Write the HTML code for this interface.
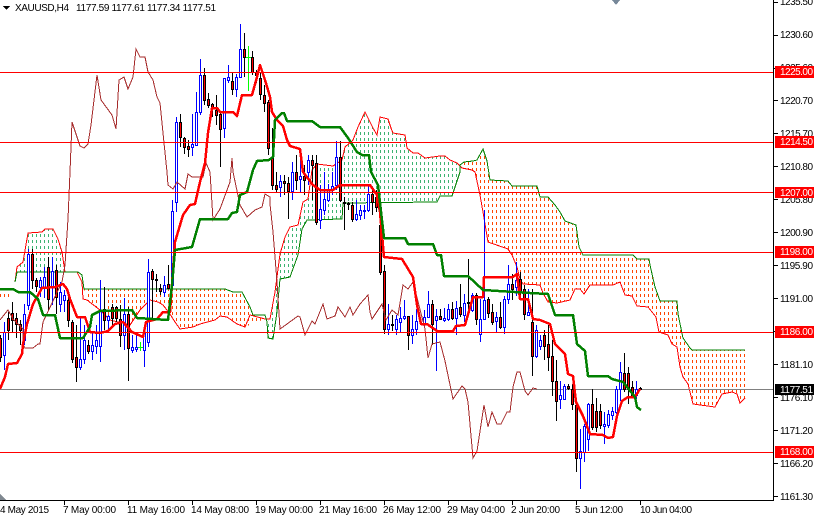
<!DOCTYPE html>
<html><head><meta charset="utf-8"><title>XAUUSD,H4</title>
<style>html,body{margin:0;padding:0;background:#fff;width:814px;height:516px;overflow:hidden}svg{display:block}text{font-family:"Liberation Sans",sans-serif;font-size:10px;fill:#000}</style></head>
<body>
<svg width="814" height="516" viewBox="0 0 814 516" xmlns="http://www.w3.org/2000/svg">
<defs>
<pattern id="g" width="4" height="6" patternUnits="userSpaceOnUse"><rect x="0" y="0" width="1" height="3" fill="#3CB371"/></pattern>
<pattern id="o" width="4" height="6" patternUnits="userSpaceOnUse"><rect x="0" y="0" width="1" height="3" fill="#FF4500"/></pattern>
</defs>
<g shape-rendering="crispEdges">
<path fill="url(#g)" d="M15 282L17 267L23 262L28 233L42 232L45 229L53 229L58 239L62 252L65 272L78 272L15 272Z"/>
<path fill="url(#o)" d="M84 289L225 289L233 292L242 292L250 307L253 315L265 319L245 327L237 324L227 317L220 316L215 320L200 324L193 327L180 329L175 322L170 314L163 305L158 302L150 300L140 310L130 325L110 320L100 310L87 300Z"/>
<path fill="url(#o)" d="M0 291L12 291L8 299L0 299Z"/>
<path fill="url(#g)" d="M267 322L268 338L273 339L277 312L280 279L290 277L298 255L302 229L307 220L342 219L343 203L437 202L440 196L452 196L460 172L460 165L457 163L450 160L445 156L440 156L425 158L418 153L413 153L407 148L405 135L393 133L391 128L388 119L380 117L377 135L373 128L370 122L365 112L358 127L353 140L345 147L342 160L333 166L317 164L312 170L308 199L303 202L298 225L290 227L285 237L280 254L275 292L270 319Z"/>
<path fill="url(#o)" d="M462 168L464 162L473 161L477 160L483 149L487 161L490 180L508 181L512 186L537 186L540 197L548 197L555 205L560 212L565 221L576 225L579 247L583 255L633 255L637 259L649 259L650 265L655 287L660 301L677 301L678 314L683 338L690 348L692 350L745 350L745 398L740 403L737 394L732 392L722 394L715 407L693 404L688 384L683 377L680 367L677 347L672 344L668 335L659 332L656 317L648 307L637 306L632 296L625 295L620 282L613 285L590 285L584 294L580 289L575 289L570 300L557 303L548 302L543 293L540 285L523 284L520 279L517 267L512 255L508 249L488 242L483 212L480 195L475 172L472 170Z"/>

<path fill="none" stroke="#f00" d="M15 282L17 267L23 262L28 233L42 232L45 229L53 229L58 239L62 252L65 272L77 272L82 282L83 299L87 300L100 310L110 320L130 325L140 310L150 300L158 302L163 305L170 314L175 322L180 329L193 327L200 324L215 320L220 316L227 317L237 324L245 327L250 315L265 319L270 319L275 292L280 254L285 237L290 227L298 225L303 202L308 199L312 170L317 164L333 166L342 160L345 147L353 140L358 127L365 112L370 122L373 128L377 135L380 117L388 119L391 128L393 133L405 135L407 148L413 153L418 153L425 158L440 156L445 156L450 160L457 163L462 168L472 170L475 172L480 195L483 212L488 242L508 249L512 255L517 267L520 279L523 284L540 285L543 293L548 302L557 303L570 300L575 289L580 289L584 294L590 285L613 285L620 282L625 295L632 296L637 306L648 307L656 317L659 332L668 335L672 344L677 347L680 367L683 377L688 384L693 404L715 407L722 394L732 392L737 394L740 403L745 398"/>
<path fill="none" stroke="#008000" d="M15 282L17 272L78 272L82 275L84 289L225 289L233 292L242 292L250 307L253 315L265 315L267 322L268 338L273 339L277 312L280 279L290 277L298 255L302 229L307 220L342 219L343 203L437 202L440 196L452 196L460 172L460 165L464 162L473 161L477 160L483 149L487 161L490 180L508 181L512 186L537 186L540 197L548 197L555 205L560 212L565 221L576 225L579 247L583 255L633 255L637 259L649 259L650 265L655 287L660 301L677 301L678 314L683 338L690 348L692 350L745 350"/>
<path fill="none" stroke="#808080" d="M0 389.5H773"/>

<path fill="none" stroke="#000" d="M0.5 335V362M8.5 312V340M12.5 302V332M16.5 313V338M20.5 320V345M32.5 249V289M36.5 278V292M48.5 257V310M56.5 265V314M68.5 297V327M72.5 320V363M76.5 325V382M88.5 340V354M104.5 287V330M112.5 304V325M116.5 306V322M120.5 305V347M128.5 307V381M152.5 269V319M156.5 274V292M160.5 284V295M168.5 265V289M180.5 114V147M184.5 137V154M188.5 140V157M204.5 68V105M208.5 93V108M212.5 103V117M216.5 95V125M220.5 112V167M232.5 72V95M244.5 33V77M252.5 51V75M256.5 70V83M260.5 72V100M264.5 85V112M268.5 100V155M272.5 128V190M276.5 172V192M284.5 175V195M288.5 177V219M296.5 155V190M304.5 165V195M312.5 155V200M316.5 155V225M340.5 141V202M344.5 197V230M348.5 202V210M352.5 202V222M372.5 190V215M376.5 190V212M380.5 202V275M384.5 265V334M392.5 315V331M408.5 316V350M432.5 300V345M440.5 309V320M452.5 302V320M460.5 284V317M468.5 259V315M476.5 293V325M488.5 297V318M492.5 304V325M500.5 302V329M512.5 274V300M520.5 272V297M524.5 285V320M532.5 289V376M544.5 330V360M548.5 325V371M552.5 340V396M556.5 360V421M568.5 384V390M572.5 384V410M576.5 404V472M592.5 389V430M596.5 398V432M600.5 404V429M624.5 353V392M628.5 367V404M632.5 381V397M640.5 387V390"/>
<path fill="none" stroke="#00f" d="M4.5 322V370M24.5 304V345M28.5 249V310M40.5 277V297M44.5 267V298M52.5 257V305M60.5 282V312M64.5 290V312M80.5 318V370M84.5 325V364M92.5 332V360M96.5 325V354M100.5 280V362M108.5 315V330M124.5 298V350M132.5 335V353M136.5 335V352M144.5 332V367M148.5 259V347M164.5 276V297M172.5 200V290M176.5 117V212M192.5 114V156M196.5 92V146M200.5 59V115M224.5 78V138M228.5 65V83M236.5 74V97M240.5 24V78M280.5 175V197M292.5 162V200M300.5 155V192M308.5 155V185M320.5 185V229M324.5 172V215M328.5 184V202M332.5 172V195M336.5 141V190M356.5 200V221M360.5 205V220M364.5 205V219M368.5 185V212M388.5 304V335M396.5 315V335M400.5 307V332M404.5 300V320M412.5 315V344M416.5 309V335M424.5 310V328M428.5 291V318M436.5 309V371M444.5 308V322M448.5 304V321M456.5 301V335M464.5 294V322M472.5 293V312M480.5 299V342M484.5 210V320M496.5 312V332M504.5 296V334M508.5 265V304M516.5 262V296M528.5 289V316M536.5 325V358M540.5 335V350M560.5 381V409M564.5 384V400M580.5 429V489M584.5 424V462M588.5 403V451M604.5 412V444M608.5 410V428M612.5 407V420M616.5 386V414M620.5 362V401M636.5 381V399"/>
<path fill="none" stroke="#0f0" d="M140.5 342V351M138 347.5H143M248.5 46V91M246 57.5H251"/>

<path fill="#f00" stroke="#000" d="M-.5 338.5h2v19h-2zM7.5 318.5h2v12h-2zM11.5 313.5h2v7h-2zM15.5 318.5h2v6h-2zM19.5 324.5h2v6h-2zM31.5 254.5h2v26h-2zM35.5 280.5h2v6h-2zM47.5 267.5h2v32h-2zM55.5 270.5h2v27h-2zM67.5 300.5h2v20h-2zM71.5 322.5h2v37h-2zM75.5 357.5h2v10h-2zM87.5 345.5h2v6h-2zM103.5 309.5h2v11h-2zM111.5 307.5h2v11h-2zM115.5 307.5h2v11h-2zM119.5 319.5h2v16h-2zM127.5 314.5h2v34h-2zM151.5 271.5h2v8h-2zM155.5 279.5h2v1h-2zM159.5 288.5h2v3h-2zM167.5 284.5h2v4h-2zM179.5 122.5h2v15h-2zM183.5 138.5h2v9h-2zM187.5 146.5h2v3h-2zM203.5 75.5h2v25h-2zM207.5 99.5h2v6h-2zM211.5 104.5h2v4h-2zM215.5 110.5h2v5h-2zM219.5 114.5h2v15h-2zM231.5 81.5h2v8h-2zM243.5 49.5h2v8h-2zM251.5 57.5h2v15h-2zM255.5 72.5h2v3h-2zM259.5 78.5h2v16h-2zM263.5 95.5h2v8h-2zM267.5 102.5h2v46h-2zM271.5 158.5h2v27h-2zM275.5 185.5h2v4h-2zM283.5 181.5h2v2h-2zM287.5 183.5h2v8h-2zM295.5 172.5h2v8h-2zM303.5 176.5h2v4h-2zM311.5 160.5h2v5h-2zM315.5 163.5h2v59h-2zM339.5 157.5h2v43h-2zM343.5 202.5h2v1h-2zM347.5 203.5h2v1h-2zM351.5 205.5h2v14h-2zM371.5 194.5h2v8h-2zM375.5 197.5h2v10h-2zM379.5 225.5h2v47h-2zM383.5 271.5h2v58h-2zM391.5 324.5h2v1h-2zM407.5 316.5h2v19h-2zM431.5 304.5h2v20h-2zM439.5 316.5h2v3h-2zM451.5 309.5h2v9h-2zM459.5 307.5h2v7h-2zM467.5 302.5h2v1h-2zM475.5 295.5h2v24h-2zM487.5 299.5h2v14h-2zM491.5 312.5h2v10h-2zM499.5 317.5h2v10h-2zM511.5 284.5h2v5h-2zM519.5 279.5h2v12h-2zM523.5 289.5h2v25h-2zM531.5 322.5h2v34h-2zM543.5 335.5h2v11h-2zM547.5 344.5h2v13h-2zM551.5 356.5h2v25h-2zM555.5 381.5h2v20h-2zM567.5 386.5h2v2h-2zM571.5 389.5h2v15h-2zM575.5 405.5h2v53h-2zM591.5 404.5h2v23h-2zM595.5 411.5h2v16h-2zM599.5 411.5h2v14h-2zM623.5 373.5h2v16h-2zM627.5 373.5h2v16h-2zM631.5 387.5h2v9h-2zM639.5 388.5h2v1h-2z"/>
<path fill="#fff" stroke="#00f" d="M3.5 332.5h2v23h-2zM23.5 314.5h2v26h-2zM27.5 254.5h2v51h-2zM39.5 280.5h2v7h-2zM43.5 277.5h2v10h-2zM51.5 271.5h2v16h-2zM59.5 292.5h2v12h-2zM63.5 295.5h2v5h-2zM79.5 359.5h2v8h-2zM83.5 340.5h2v19h-2zM91.5 345.5h2v6h-2zM95.5 340.5h2v6h-2zM99.5 310.5h2v36h-2zM107.5 316.5h2v4h-2zM123.5 314.5h2v21h-2zM131.5 347.5h2v3h-2zM135.5 347.5h2v2h-2zM143.5 332.5h2v18h-2zM147.5 272.5h2v70h-2zM163.5 285.5h2v7h-2zM171.5 211.5h2v74h-2zM175.5 122.5h2v80h-2zM191.5 144.5h2v3h-2zM195.5 112.5h2v33h-2zM199.5 75.5h2v37h-2zM223.5 78.5h2v50h-2zM227.5 77.5h2v3h-2zM235.5 77.5h2v12h-2zM239.5 49.5h2v28h-2zM279.5 181.5h2v6h-2zM291.5 172.5h2v19h-2zM299.5 176.5h2v3h-2zM307.5 160.5h2v12h-2zM319.5 209.5h2v11h-2zM323.5 199.5h2v11h-2zM327.5 190.5h2v10h-2zM331.5 186.5h2v4h-2zM335.5 157.5h2v28h-2zM355.5 214.5h2v5h-2zM359.5 210.5h2v5h-2zM363.5 210.5h2v1h-2zM367.5 194.5h2v16h-2zM387.5 324.5h2v5h-2zM395.5 319.5h2v10h-2zM399.5 318.5h2v4h-2zM403.5 316.5h2v2h-2zM411.5 329.5h2v6h-2zM415.5 321.5h2v8h-2zM423.5 317.5h2v7h-2zM427.5 304.5h2v13h-2zM435.5 316.5h2v4h-2zM443.5 318.5h2v2h-2zM447.5 309.5h2v10h-2zM455.5 308.5h2v10h-2zM463.5 303.5h2v12h-2zM471.5 295.5h2v15h-2zM479.5 319.5h2v15h-2zM483.5 300.5h2v19h-2zM495.5 317.5h2v4h-2zM503.5 299.5h2v28h-2zM507.5 284.5h2v15h-2zM515.5 280.5h2v7h-2zM527.5 312.5h2v3h-2zM535.5 330.5h2v26h-2zM539.5 340.5h2v6h-2zM559.5 395.5h2v4h-2zM563.5 386.5h2v13h-2zM579.5 451.5h2v7h-2zM583.5 426.5h2v26h-2zM587.5 404.5h2v35h-2zM603.5 424.5h2v2h-2zM607.5 414.5h2v11h-2zM611.5 411.5h2v4h-2zM615.5 389.5h2v23h-2zM619.5 372.5h2v17h-2zM635.5 389.5h2v6h-2z"/>

<path fill="none" stroke="#A52A2A" d="M0 320L8 310L13 319L23 329L23 344L25 348L33 348L38 344L40 344L43 322L62 282L65 265L68 219L70 172L72 122L77 137L80 146L84 148L88 144L91 125L94 100L97 75L101 100L112 115L116 129L119 80L124 77L128 89L133 77L136 49L140 57L145 57L148 72L153 80L157 97L160 103L163 133L167 172L168 185L173 189L177 182L185 189L188 174L192 177L203 177L206 163L210 172L213 220L220 209L230 182L232 158L233 172L240 205L247 217L255 210L262 207L265 194L270 197L270 204L273 232L277 282L280 329L287 324L298 316L300 317L305 335L312 321L315 324L323 304L327 319L335 316L338 307L345 317L350 307L353 315L360 304L368 295L370 312L372 319L382 304L386 320L392 310L398 315L403 285L408 289L413 282L425 329L428 358L432 344L440 342L445 361L453 399L462 386L465 389L468 402L473 458L477 451L484 405L488 427L492 412L497 424L501 424L507 412L510 412L513 387L517 372L520 372L525 391L528 395L533 388L537 389"/>

<path fill="none" stroke="#f00" stroke-width="2.5" stroke-linejoin="round" d="M0 389L5 377L8 364L17 363L22 354L23 344L27 324L33 304L42 288L55 287L63 284L67 289L70 299L77 317L85 317L90 332L100 333L108 331L115 324L123 322L132 332L143 337L146 322L157 319L163 312L170 312L175 242L183 215L190 205L195 204L200 182L205 163L208 133L212 108L217 108L220 112L233 112L237 116L242 95L252 95L257 77L260 65L265 80L268 90L270 97L272 112L277 120L283 126L287 140L290 146L300 149L303 172L313 185L320 190L333 190L340 185L370 185L377 195L380 212L384 257L402 259L413 277L417 305L421 324L427 324L437 331L453 331L456 326L465 325L473 297L483 297L484 277L513 277L517 274L520 299L528 299L533 319L540 320L550 324L555 344L565 354L568 374L573 376L576 402L583 416L590 434L603 435L608 438L613 437L617 416L622 401L628 397L635 397L640 389"/>
<path fill="none" stroke="#008000" stroke-width="2.5" stroke-linejoin="round" d="M0 289L13 289L18 292L30 292L38 299L43 315L55 315L60 338L83 338L90 327L92 315L100 311L132 310L137 318L168 320L172 285L175 250L192 247L200 219L228 219L232 213L237 212L240 195L247 192L253 170L257 161L269 160L273 157L275 120L282 113L284 113L287 121L312 121L320 127L340 127L348 138L357 152L362 155L369 155L371 172L378 185L384 238L405 238L408 244L433 244L437 255L441 255L444 276L468 276L483 290L530 293L548 294L555 315L573 315L577 344L585 351L588 376L608 376L612 379L623 382L635 397L637 407L641 410"/>

<path fill="none" stroke="#f00" d="M0 72.5H773M0 142.5H773M0 192.5H773M0 252.5H773M0 332.5H773M0 452.5H773"/>

<path fill="#778899" d="M612 0H620L616 5Z"/>
<path fill="#808890" d="M0 494L6 500H0Z"/>

<path fill="none" stroke="#000" d="M0 500.5H773.5M773.5 0V501M64.5 500V505M128.5 500V505M192.5 500V505M256.5 500V505M320.5 500V505M384.5 500V505M448.5 500V505M512.5 500V505M576.5 500V505M640.5 500V505M773 2.5H778M773 35.5H778M773 68.5H778M773 100.5H778M773 133.5H778M773 166.5H778M773 199.5H778M773 232.5H778M773 265.5H778M773 298.5H778M773 331.5H778M773 364.5H778M773 397.5H778M773 430.5H778M773 463.5H778M773 496.5H778"/>
<path fill="#000" d="M3 6H10L6.5 10Z"/>
</g>

<text x="15" y="11" textLength="54" lengthAdjust="spacing">XAUUSD,H4</text>
<text x="76" y="11" textLength="140" lengthAdjust="spacing">1177.59 1177.61 1177.34 1177.51</text>

<text x="780" y="5" textLength="33" lengthAdjust="spacing">1235.50</text>
<text x="780" y="38" textLength="33" lengthAdjust="spacing">1230.60</text>
<text x="780" y="71" textLength="33" lengthAdjust="spacing">1225.60</text>
<text x="780" y="104" textLength="33" lengthAdjust="spacing">1220.70</text>
<text x="780" y="137" textLength="33" lengthAdjust="spacing">1215.70</text>
<text x="780" y="170" textLength="33" lengthAdjust="spacing">1210.80</text>
<text x="780" y="203" textLength="33" lengthAdjust="spacing">1205.80</text>
<text x="780" y="236" textLength="33" lengthAdjust="spacing">1200.90</text>
<text x="780" y="269" textLength="33" lengthAdjust="spacing">1195.90</text>
<text x="780" y="302" textLength="33" lengthAdjust="spacing">1191.00</text>
<text x="780" y="368" textLength="33" lengthAdjust="spacing">1181.10</text>
<text x="780" y="401" textLength="33" lengthAdjust="spacing">1176.10</text>
<text x="780" y="434" textLength="33" lengthAdjust="spacing">1171.20</text>
<text x="780" y="467" textLength="33" lengthAdjust="spacing">1166.20</text>
<text x="780" y="500" textLength="33" lengthAdjust="spacing">1161.30</text>

<g shape-rendering="crispEdges"><path fill="#f00" d="M775 66h39v12h-39zM775 136h39v12h-39zM775 187h39v11h-39zM775 246h39v12h-39zM775 326h39v12h-39zM775 446h39v12h-39z"/><path fill="#000" d="M775 384h39v11h-39z"/></g>
<text x="780" y="75" textLength="33" lengthAdjust="spacing" style="fill:#fff">1225.00</text>
<text x="780" y="145" textLength="33" lengthAdjust="spacing" style="fill:#fff">1214.50</text>
<text x="780" y="196" textLength="33" lengthAdjust="spacing" style="fill:#fff">1207.00</text>
<text x="780" y="255" textLength="33" lengthAdjust="spacing" style="fill:#fff">1198.00</text>
<text x="780" y="335" textLength="33" lengthAdjust="spacing" style="fill:#fff">1186.00</text>
<text x="780" y="455" textLength="33" lengthAdjust="spacing" style="fill:#fff">1168.00</text>
<text x="780" y="393" textLength="33" lengthAdjust="spacing" style="fill:#fff">1177.51</text>

<text x="0" y="513" textLength="49" lengthAdjust="spacing">4 May 2015</text>
<text x="63" y="513" textLength="53" lengthAdjust="spacing">7 May 00:00</text>
<text x="127" y="513" textLength="58" lengthAdjust="spacing">11 May 16:00</text>
<text x="191" y="513" textLength="58" lengthAdjust="spacing">14 May 08:00</text>
<text x="255" y="513" textLength="58" lengthAdjust="spacing">19 May 00:00</text>
<text x="319" y="513" textLength="58" lengthAdjust="spacing">21 May 16:00</text>
<text x="383" y="513" textLength="58" lengthAdjust="spacing">26 May 12:00</text>
<text x="447" y="513" textLength="58" lengthAdjust="spacing">29 May 04:00</text>
<text x="511" y="513" textLength="49" lengthAdjust="spacing">2 Jun 20:00</text>
<text x="575" y="513" textLength="48" lengthAdjust="spacing">5 Jun 12:00</text>
<text x="640" y="513" textLength="52" lengthAdjust="spacing">10 Jun 04:00</text>
</svg>
</body></html>
